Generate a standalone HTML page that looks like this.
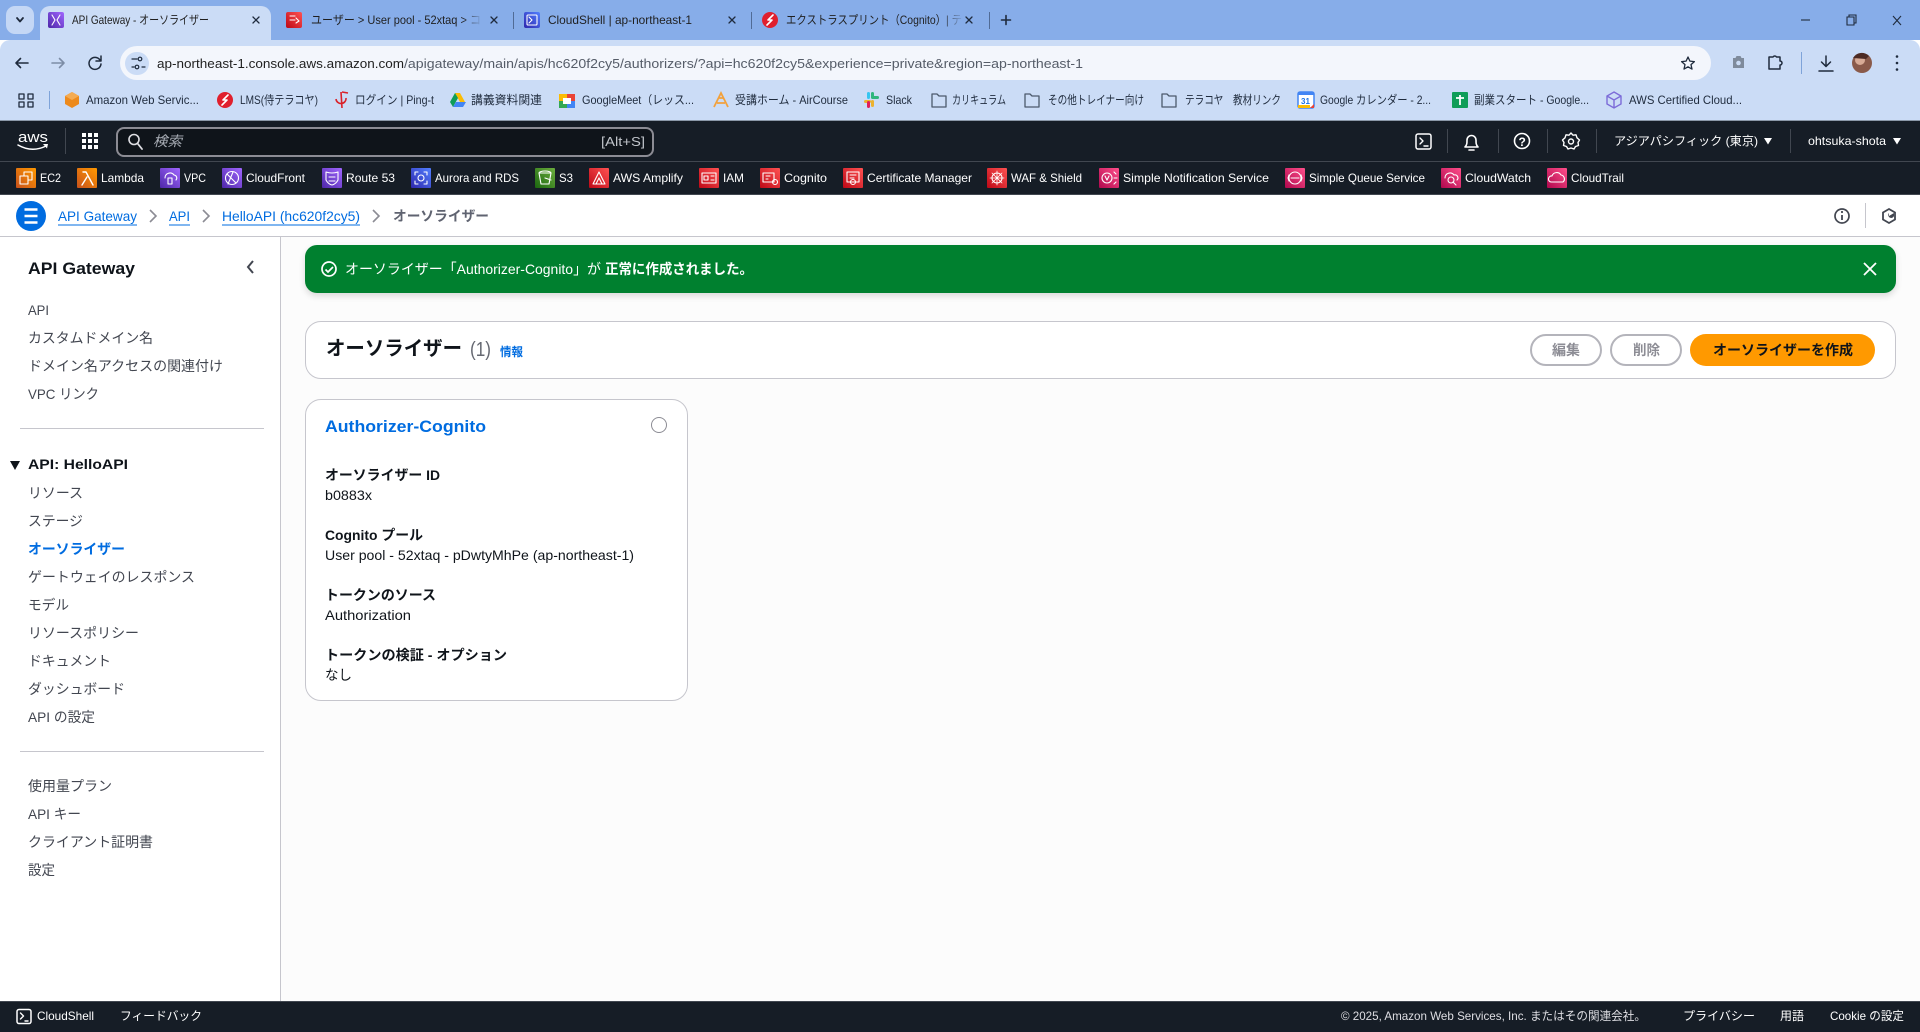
<!DOCTYPE html>
<html lang="ja"><head><meta charset="utf-8"><title>API Gateway - オーソライザー</title>
<style>
html,body{margin:0;padding:0;width:1920px;height:1032px;overflow:hidden;background:#fff}
div{position:absolute;box-sizing:border-box}
svg{position:absolute;left:0;top:0}
text{font-family:"Liberation Sans","Noto Sans CJK JP",sans-serif;font-size:12px;white-space:pre}
.w text{fill:#fff}
.nav{font-size:14px;fill:#424650}
.b{font-weight:700}
.k{font-size:14px;fill:#0f141a}
.kb{font-size:14px;font-weight:700;fill:#0f141a}
.bk{fill:#1f2b3d;font-size:12px}
.tb{fill:#1f1f1f;font-size:12px}
.ln{stroke:#1f2b3d;stroke-width:1.4;fill:none;stroke-linecap:round;stroke-linejoin:round}
.g{stroke:#fff;stroke-width:1.1;fill:none;stroke-linejoin:round;stroke-linecap:round}
.wl{stroke:#fff;stroke-width:1.6;fill:none;stroke-linecap:round;stroke-linejoin:round}
</style></head><body>
<div style="left:0;top:0;width:1920px;height:40px;background:#87ade9"></div>
<div style="left:6px;top:6px;width:28px;height:28px;border-radius:9px;background:#c4d7f5"></div>
<div style="left:40px;top:6px;width:231px;height:36px;border-radius:10px 10px 0 0;background:#cbdcf6"></div>
<div style="left:0;top:40px;width:1920px;height:80px;background:#cbdcf6;border-radius:10px 10px 0 0"></div>
<div style="left:120px;top:46px;width:1591px;height:34px;border-radius:17px;background:#f3f6fc"></div>
<div style="left:125px;top:52px;width:24px;height:23px;border-radius:12px;background:#cbdcf6"></div>
<div style="left:0;top:120px;width:1920px;height:42px;background:#161d26;border-top:1px solid #8b98a8"></div>
<div style="left:0;top:161px;width:1920px;height:34px;background:#161d26;border-top:1px solid #414750;border-bottom:1px solid #414750"></div>
<div style="left:116px;top:127px;width:538px;height:30px;border-radius:8px;background:#0f141a;border:2px solid #8c8c94"></div>
<div style="left:0;top:195px;width:1920px;height:42px;background:#fff;border-bottom:1px solid #c6c6cd"></div>
<div style="left:0;top:237px;width:281px;height:764px;background:#fff;border-right:1px solid #c6c6cd"></div>
<div style="left:281px;top:237px;width:1639px;height:764px;background:#fcfcfc"></div>
<div style="left:20px;top:428px;width:244px;height:1px;background:#c6c6cd"></div>
<div style="left:20px;top:751px;width:244px;height:1px;background:#c6c6cd"></div>
<div style="left:305px;top:245px;width:1591px;height:48px;border-radius:12px;background:#00802f;box-shadow:0 3px 7px rgba(0,0,0,.14)"></div>
<div style="left:305px;top:321px;width:1591px;height:58px;border-radius:16px;background:#fff;border:1px solid #c6c6cd"></div>
<div style="left:305px;top:399px;width:383px;height:302px;border-radius:16px;background:#fff;border:1px solid #c6c6cd"></div>
<div style="left:1530px;top:334px;width:72px;height:32px;border-radius:16px;background:#fff;border:2px solid #b4b4bb"></div>
<div style="left:1610px;top:334px;width:72px;height:32px;border-radius:16px;background:#fff;border:2px solid #b4b4bb"></div>
<div style="left:1690px;top:334px;width:185px;height:32px;border-radius:16px;background:#ff9900"></div>
<div style="left:651px;top:417px;width:16px;height:16px;border-radius:8px;background:#fff;border:1px solid #8c8c94"></div>
<div style="left:16px;top:201px;width:30px;height:30px;border-radius:15px;background:#006ce0"></div>
<div style="left:0;top:1001px;width:1920px;height:31px;background:#161d26;border-top:1px solid #414750"></div>

<svg width="1920" height="1032" viewBox="0 0 1920 1032">
<defs>
<linearGradient id="or" x1="0" y1="1" x2="1" y2="0"><stop offset="0" stop-color="#c8511b"/><stop offset="1" stop-color="#ff9900"/></linearGradient>
<linearGradient id="pu" x1="0" y1="1" x2="1" y2="0"><stop offset="0" stop-color="#4d27a8"/><stop offset="1" stop-color="#a166ff"/></linearGradient>
<linearGradient id="bl" x1="0" y1="1" x2="1" y2="0"><stop offset="0" stop-color="#2e27ad"/><stop offset="1" stop-color="#527fff"/></linearGradient>
<linearGradient id="gr" x1="0" y1="1" x2="1" y2="0"><stop offset="0" stop-color="#1b660f"/><stop offset="1" stop-color="#6cae3e"/></linearGradient>
<linearGradient id="re" x1="0" y1="1" x2="1" y2="0"><stop offset="0" stop-color="#bd0816"/><stop offset="1" stop-color="#ff5252"/></linearGradient>
<linearGradient id="pk" x1="0" y1="1" x2="1" y2="0"><stop offset="0" stop-color="#b0084d"/><stop offset="1" stop-color="#ff4f8b"/></linearGradient>
<linearGradient id="fd" x1="0" x2="1"><stop offset="0" stop-color="#87ade9" stop-opacity="0"/><stop offset="1" stop-color="#87ade9"/></linearGradient>
</defs>

<!-- tab strip -->
<path d="M17 18l3 3.500 3-3.500" fill="none" stroke="#1f2b3d" stroke-width="1.800" stroke-linecap="round" stroke-linejoin="round"/>
<rect x="48" y="12" width="16" height="16" rx="2" fill="url(#pu)"/><path class="g" d="M52 15l3 5-3 5M60 15l-3 5 3 5"/>
<text x="72" y="24" class="tb" textLength="137" lengthAdjust="spacingAndGlyphs">API Gateway - オーソライザー</text>
<path class="ln" d="M253 17l6 6M259 17l-6 6" style="stroke-width:1.300"/>
<rect x="286" y="12" width="16" height="16" rx="2" fill="url(#re)"/><path class="g" d="M290 16h5M290 20h5M296 23l3-2-3-3"/>
<text x="311" y="24" class="tb" textLength="170" lengthAdjust="spacingAndGlyphs">ユーザー &gt; User pool - 52xtaq &gt; コ</text>
<rect x="462" y="10" width="20" height="20" fill="url(#fd)"/>
<path class="ln" d="M491 17l6 6M497 17l-6 6" style="stroke-width:1.300"/>
<rect x="513" y="12" width="1" height="17" fill="#506b96"/>
<rect x="524" y="12" width="16" height="16" rx="2" fill="url(#bl)"/><rect x="527" y="15" width="10" height="10" rx="1" class="g"/><path class="g" d="M529 17l3 3-3 3"/>
<text x="548" y="24" class="tb" textLength="144" lengthAdjust="spacingAndGlyphs">CloudShell | ap-northeast-1</text>
<path class="ln" d="M729 17l6 6M735 17l-6 6" style="stroke-width:1.300"/>
<rect x="751" y="12" width="1" height="17" fill="#506b96"/>
<circle cx="770" cy="20" r="8" fill="#e01f2d"/><path class="g" d="M773 15l-5 5h4l-5 5" style="stroke-width:1.6"/>
<text x="786" y="24" class="tb" textLength="176" lengthAdjust="spacingAndGlyphs">エクストラスプリント（Cognito）| テ</text>
<rect x="940" y="10" width="24" height="20" fill="url(#fd)"/>
<path class="ln" d="M966 17l6 6M972 17l-6 6" style="stroke-width:1.300"/>
<rect x="989" y="12" width="1" height="17" fill="#506b96"/>
<path class="ln" d="M1006 15.500v9M1001.500 20h9" style="stroke-width:1.600"/>
<path d="M1801 20h9" stroke="#1f2b3d" stroke-width="1.100"/>
<path d="M1847 17h7v8h-7zM1849 17v-2h7v8h-2" fill="none" stroke="#1f2b3d" stroke-width="1.100"/>
<path d="M1893 16l8 9M1901 16l-8 9" stroke="#1f2b3d" stroke-width="1.100"/>

<!-- toolbar -->
<path class="ln" d="M28 63H16M20.500 58.500L16 63l4.500 4.500" style="stroke-width:1.600"/>
<path class="ln" d="M52 63h12M59.500 58.500L64 63l-4.500 4.500" style="stroke:#7d8da6;stroke-width:1.600"/>
<path class="ln" d="M100 60a6 6 0 1 0 1 4M101 56v5h-5" style="stroke-width:1.500"/>
<path class="ln" d="M132 59h5M132 67h2M142 67h3" style="stroke-width:1.200"/><circle cx="140" cy="59" r="1.800" class="ln" style="stroke-width:1.200"/><circle cx="137" cy="67" r="1.800" class="ln" style="stroke-width:1.200"/>
<text x="157" y="68" fill="#1f1f1f" style="font-size:13px" textLength="247" lengthAdjust="spacingAndGlyphs">ap-northeast-1.console.aws.amazon.com</text>
<text x="404" y="68" fill="#555c68" style="font-size:13px" textLength="679" lengthAdjust="spacingAndGlyphs">/apigateway/main/apis/hc620f2cy5/authorizers/?api=hc620f2cy5&amp;experience=private&amp;region=ap-northeast-1</text>
<path class="ln" d="M1688 57l1.900 4.100 4.500.5-3.400 3 1 4.500-4-2.300-4 2.300 1-4.500-3.400-3 4.500-.5z" style="stroke-width:1.300"/>
<path d="M1733 58h2.500l1-2h4l1 2h2.500v10h-11z" fill="#7f8b9c"/><circle cx="1738.500" cy="63" r="2.300" fill="#cbdcf6"/>
<path class="ln" d="M1769 57h4a2 2 0 0 1 3.500 0h3.500v4a2 2 0 0 1 0 4v4h-11z" style="stroke-width:1.500"/>
<rect x="1801" y="52" width="1" height="22" fill="#7ea3d9"/>
<path class="ln" d="M1826 56v10M1821.500 62l4.500 4.500 4.500-4.500M1819 71h14" style="stroke-width:1.500"/>
<circle cx="1862" cy="63" r="10" fill="#8a5a4a"/><circle cx="1860" cy="60" r="5" fill="#d8ab96"/><path d="M1853 58a10 10 0 0 1 16-2l-3 3z" fill="#4c2a23"/>
<circle cx="1897" cy="56.500" r="1.300" fill="#1f2b3d"/><circle cx="1897" cy="63" r="1.300" fill="#1f2b3d"/><circle cx="1897" cy="69.500" r="1.300" fill="#1f2b3d"/>

<!-- bookmarks -->
<path class="ln" style="stroke-width:1.300" d="M19 94h5v5h-5zM28 94h5v5h-5zM19 102h5v5h-5zM28 102h5v5h-5z"/>
<rect x="49" y="91" width="1" height="18" fill="#7ea3d9"/>
<path d="M72 92l7 4v8l-7 4-7-4v-8z" fill="#ed8a1c"/><path d="M65 96l7 4 7-4-7-4z" fill="#f4ab52"/>
<text x="86" y="104" class="bk" textLength="113" lengthAdjust="spacingAndGlyphs">Amazon Web Servic...</text>
<circle cx="225" cy="100" r="8" fill="#e01f2d"/><path class="g" d="M228 95l-5 5h4l-5 5" style="stroke-width:1.6"/>
<text x="240" y="104" class="bk" textLength="78" lengthAdjust="spacingAndGlyphs">LMS(侍テラコヤ)</text>
<path d="M341 92l1 16M336 99a5 5 0 1 0 10-1M342 92l6 1" fill="none" stroke="#d9222a" stroke-width="1.600"/>
<text x="355" y="104" class="bk" textLength="79" lengthAdjust="spacingAndGlyphs">ログイン | Ping-t</text>
<path d="M455 93h5l5 9h-5z" fill="#fbbc04"/><path d="M455 93l-5 9 3 5 5-9z" fill="#0f9d58"/><path d="M453 107h10l3-5h-10z" fill="#4285f4"/>
<text x="471" y="104" class="bk" textLength="71" lengthAdjust="spacingAndGlyphs">講義資料関連</text>
<rect x="559" y="94" width="8" height="7" fill="#fbbc04"/><rect x="559" y="101" width="8" height="7" fill="#34a853"/><rect x="567" y="94" width="8" height="7" fill="#ea4335"/><rect x="567" y="101" width="8" height="7" fill="#4285f4"/><rect x="563" y="98" width="8" height="6" fill="#fff"/>
<text x="582" y="104" class="bk" textLength="112" lengthAdjust="spacingAndGlyphs">GoogleMeet（レッス...</text>
<path d="M714 107l7-14 7 14M717 103h8M719 98h4" fill="none" stroke="#f2a13c" stroke-width="1.800"/>
<text x="735" y="104" class="bk" textLength="113" lengthAdjust="spacingAndGlyphs">受講ホーム - AirCourse</text>
<rect x="867" y="92" width="3" height="7" rx="1.500" fill="#36c5f0"/><rect x="871" y="92" width="3" height="7" rx="1.500" fill="#2eb67d"/><rect x="864" y="100" width="7" height="3" rx="1.500" fill="#ecb22e"/><rect x="872" y="96" width="7" height="3" rx="1.500" fill="#2eb67d"/><rect x="867" y="101" width="3" height="7" rx="1.500" fill="#e01e5a"/><rect x="871" y="100" width="3" height="7" rx="1.500" fill="#ecb22e"/>
<text x="886" y="104" class="bk" textLength="26" lengthAdjust="spacingAndGlyphs">Slack</text>
<g class="ln" style="stroke:#4c5a6c;stroke-width:1.300"><path d="M932 94h5l2 2h7v11h-14z"/><path d="M1025 94h5l2 2h7v11h-14z"/><path d="M1162 94h5l2 2h7v11h-14z"/></g>
<text x="952" y="104" class="bk" textLength="54" lengthAdjust="spacingAndGlyphs">カリキュラム</text>
<text x="1048" y="104" class="bk" textLength="96" lengthAdjust="spacingAndGlyphs">その他トレイナー向け</text>
<text x="1185" y="104" class="bk" textLength="96" lengthAdjust="spacingAndGlyphs">テラコヤ　教材リンク</text>
<rect x="1298" y="92" width="16" height="16" rx="2" fill="#fff" stroke="#4285f4" stroke-width="1.500"/><rect x="1298" y="92" width="16" height="3" fill="#4285f4"/><path d="M1310 108l4-4v4z" fill="#ea4335"/><rect x="1298" y="105" width="12" height="3" fill="#fbbc04"/><text x="1301" y="104" fill="#1a73e8" style="font-size:8px;font-weight:700">31</text>
<text x="1320" y="104" class="bk" textLength="111" lengthAdjust="spacingAndGlyphs">Google カレンダー - 2...</text>
<rect x="1452" y="92" width="16" height="16" rx="1" fill="#0f9d58"/><path d="M1460 95v10M1456 98h8" stroke="#fff" stroke-width="1.800"/>
<text x="1474" y="104" class="bk" textLength="115" lengthAdjust="spacingAndGlyphs">副業スタート - Google...</text>
<path d="M1614 92l7 4v8l-7 4-7-4v-8zM1607 96l7 4 7-4M1614 100v8" fill="none" stroke="#7c6bd8" stroke-width="1.400"/>
<text x="1629" y="104" class="bk" textLength="113" lengthAdjust="spacingAndGlyphs">AWS Certified Cloud...</text>

<!-- aws header -->
<g class="w">
<text x="18" y="142" style="font-size:15px" textLength="30" lengthAdjust="spacingAndGlyphs">aws</text>
</g>
<path d="M18 145q14 8 28 1" fill="none" stroke="#fff" stroke-width="1.500" stroke-linecap="round"/><path d="M43 144l5 0-1 4.500z" fill="#fff"/>
<rect x="65" y="128" width="1" height="26" fill="#414750"/>
<g fill="#fff"><rect x="82" y="133" width="4" height="4"/><rect x="88" y="133" width="4" height="4"/><rect x="94" y="133" width="4" height="4"/><rect x="82" y="139" width="4" height="4"/><rect x="88" y="139" width="4" height="4"/><rect x="94" y="139" width="4" height="4"/><rect x="82" y="145" width="4" height="4"/><rect x="88" y="145" width="4" height="4"/><rect x="94" y="145" width="4" height="4"/></g>
<circle cx="134" cy="139.500" r="5" fill="none" stroke="#dedee3" stroke-width="1.600"/><path d="M138 144l4 5" stroke="#dedee3" stroke-width="1.800" stroke-linecap="round"/>
<text x="153" y="146" fill="#a8adb5" style="font-size:14px;font-style:italic" textLength="29" lengthAdjust="spacingAndGlyphs">検索</text>
<text x="601" y="146" fill="#c0c4ca" style="font-size:13px" textLength="44" lengthAdjust="spacingAndGlyphs">[Alt+S]</text>
<rect x="1416" y="134" width="15" height="15" rx="2" class="wl" style="stroke-width:1.500"/><path class="wl" d="M1420 138l3 3-3 3M1424 146h4" style="stroke-width:1.400"/>
<g fill="#414750"><rect x="1447" y="129" width="1" height="24"/><rect x="1498" y="129" width="1" height="24"/><rect x="1547" y="129" width="1" height="24"/><rect x="1596" y="129" width="1" height="24"/><rect x="1790" y="129" width="1" height="24"/></g>
<path class="wl" d="M1465 147c2-2 2-4 2-7a4.500 4.500 0 0 1 9 0c0 3 0 5 2 7zM1469 150h5"/>
<circle cx="1522" cy="141" r="7.500" class="wl"/><text x="1518.500" y="146" fill="#fff" style="font-size:12px;font-weight:700">?</text>
<path class="wl" d="M1571 133l2 2.200 3-.4 1 3 2.500 2.200-1.500 2.500.5 3-3 1-1.500 2.500-3-1-3 1-1.500-2.500-3-1 .5-3-1.500-2.500 2.500-2.200 1-3 3 .4z" style="stroke-width:1.400"/><circle cx="1571" cy="141.500" r="2.500" class="wl" style="stroke-width:1.400"/>
<g class="w"><text x="1614" y="145" textLength="144" lengthAdjust="spacingAndGlyphs">アジアパシフィック (東京)</text>
<text x="1808" y="145" textLength="78" lengthAdjust="spacingAndGlyphs">ohtsuka-shota</text></g>
<path d="M1764 138h8l-4 6.500z" fill="#fff"/><path d="M1893 138h8l-4 6.500z" fill="#fff"/>

<!-- services bar -->
<rect x="16" y="168" width="20" height="20" rx="1" fill="url(#or)"/><path class="g" d="M20 176h8v8h-8zM24 176v-4h8v8h-4"/>
<rect x="77" y="168" width="20" height="20" rx="1" fill="url(#or)"/><path class="g" d="M83 172h3l7 13M87 177l-5 8" style="stroke-width:1.400"/>
<rect x="160" y="168" width="20" height="20" rx="1" fill="url(#pu)"/><path class="g" d="M165 178a5 5 0 0 1 9-3 3 3 0 0 1 2 5M168 178h4v6h-4z"/>
<rect x="222" y="168" width="20" height="20" rx="1" fill="url(#pu)"/><circle cx="232" cy="178" r="6.500" class="g"/><path class="g" d="M227 174l9 9M233 172l-5 12"/>
<rect x="322" y="168" width="20" height="20" rx="1" fill="url(#pu)"/><path class="g" d="M326 172q6 2 12 0v8q-2 4-6 5-4-1-6-5zM329 177h6M329 181h6"/>
<rect x="411" y="168" width="20" height="20" rx="1" fill="url(#bl)"/><path class="g" d="M415 175v-3h3M424 172h3v3M427 181v3h-3M418 184h-3v-3"/><circle cx="421" cy="178" r="3" class="g"/>
<rect x="535" y="168" width="20" height="20" rx="1" fill="url(#gr)"/><path class="g" d="M539 173h12l-2 11h-8zM539 173a6 2 0 0 1 12 0M545 178l6 2"/>
<rect x="589" y="168" width="20" height="20" rx="1" fill="url(#re)"/><path class="g" d="M599 172l6 12h-12zM599 178l-3 6M599 178l3 6"/>
<rect x="699" y="168" width="20" height="20" rx="1" fill="url(#re)"/><path class="g" d="M702 173h14v10h-14zM704 176h4v4h-4zM711 176h3M711 180h3"/>
<rect x="760" y="168" width="20" height="20" rx="1" fill="url(#re)"/><path class="g" d="M763 173h11v9h-11zM766 176h4M766 179h2"/><circle cx="775" cy="182" r="2.500" class="g"/>
<rect x="843" y="168" width="20" height="20" rx="1" fill="url(#re)"/><path class="g" d="M847 172h12v10h-12zM850 175h6M850 178h4"/><circle cx="853" cy="182" r="2.500" class="g"/>
<rect x="987" y="168" width="20" height="20" rx="1" fill="url(#re)"/><circle cx="997" cy="178" r="5" class="g"/><path class="g" d="M997 171v14M990 178h14M992 173l10 10M1002 173l-10 10" style="stroke-width:.8"/>
<rect x="1099" y="168" width="20" height="20" rx="1" fill="url(#pk)"/><circle cx="1107" cy="178" r="5" class="g"/><path class="g" d="M1105 176l2 4 2-4M1114 172l2 2M1114 178h3M1114 184l2-2"/>
<rect x="1285" y="168" width="20" height="20" rx="1" fill="url(#pk)"/><circle cx="1295" cy="178" r="6" class="g"/><path class="g" d="M1291 178h8M1289 175l-1 3 1 3M1301 175l1 3-1 3"/>
<rect x="1441" y="168" width="20" height="20" rx="1" fill="url(#pk)"/><path class="g" d="M1445 178a5 5 0 0 1 9-3 3 3 0 0 1 3 5"/><circle cx="1451" cy="180" r="3" class="g"/><path class="g" d="M1453 182l3 3"/>
<rect x="1547" y="168" width="20" height="20" rx="1" fill="url(#pk)"/><path class="g" d="M1551 182a3 3 0 0 1 1-6 5 5 0 0 1 9-1 4 4 0 0 1 2 7z"/>
<g class="w">
<text x="40" y="182" textLength="21" lengthAdjust="spacingAndGlyphs">EC2</text>
<text x="101" y="182" textLength="43" lengthAdjust="spacingAndGlyphs">Lambda</text>
<text x="184" y="182" textLength="22" lengthAdjust="spacingAndGlyphs">VPC</text>
<text x="246" y="182" textLength="59" lengthAdjust="spacingAndGlyphs">CloudFront</text>
<text x="346" y="182" textLength="49" lengthAdjust="spacingAndGlyphs">Route 53</text>
<text x="435" y="182" textLength="84" lengthAdjust="spacingAndGlyphs">Aurora and RDS</text>
<text x="559" y="182" textLength="14" lengthAdjust="spacingAndGlyphs">S3</text>
<text x="613" y="182" textLength="70" lengthAdjust="spacingAndGlyphs">AWS Amplify</text>
<text x="723" y="182" textLength="21" lengthAdjust="spacingAndGlyphs">IAM</text>
<text x="784" y="182" textLength="43" lengthAdjust="spacingAndGlyphs">Cognito</text>
<text x="867" y="182" textLength="105" lengthAdjust="spacingAndGlyphs">Certificate Manager</text>
<text x="1011" y="182" textLength="71" lengthAdjust="spacingAndGlyphs">WAF &amp; Shield</text>
<text x="1123" y="182" textLength="146" lengthAdjust="spacingAndGlyphs">Simple Notification Service</text>
<text x="1309" y="182" textLength="116" lengthAdjust="spacingAndGlyphs">Simple Queue Service</text>
<text x="1465" y="182" textLength="66" lengthAdjust="spacingAndGlyphs">CloudWatch</text>
<text x="1571" y="182" textLength="53" lengthAdjust="spacingAndGlyphs">CloudTrail</text>
</g>

<!-- breadcrumb -->
<path d="M24.500 209.500h13M24.500 216h13M24.500 222.500h13" stroke="#fff" stroke-width="2.600" stroke-linecap="butt"/>
<text x="58" y="221" style="font-size:14px" fill="#006ce0" textLength="79" lengthAdjust="spacingAndGlyphs">API Gateway</text>
<text x="169" y="221" style="font-size:14px" fill="#006ce0" textLength="21" lengthAdjust="spacingAndGlyphs">API</text>
<text x="222" y="221" style="font-size:14px" fill="#006ce0" textLength="138" lengthAdjust="spacingAndGlyphs">HelloAPI (hc620f2cy5)</text>
<path d="M58 225h79M169 225h21M222 225h138" stroke="#006ce0" stroke-width="1"/>
<path d="M150 210l6 6-6 6M203 210l6 6-6 6M373 210l6 6-6 6" fill="none" stroke="#8c8c94" stroke-width="1.600"/>
<text x="393" y="221" class="b" style="font-size:14px" fill="#5f6370" textLength="96" lengthAdjust="spacingAndGlyphs">オーソライザー</text>
<circle cx="1842" cy="216" r="7" fill="none" stroke="#424650" stroke-width="1.700"/><path d="M1842 215v5" stroke="#424650" stroke-width="1.800"/><circle cx="1842" cy="212" r="1.100" fill="#424650"/>
<rect x="1865" y="203" width="1" height="25" fill="#c6c6cd"/>
<path d="M1889 209l6 3.500v7l-6 3.500-6-3.500v-7z" fill="none" stroke="#424650" stroke-width="1.800"/><path d="M1889 216l5-3v3a3 3 0 0 1-5 1 3 3 0 0 1 0-4" fill="#424650"/>

<!-- side nav -->
<text x="28" y="274" class="b" fill="#0f141a" style="font-size:17px" textLength="107" lengthAdjust="spacingAndGlyphs">API Gateway</text>
<path d="M253 261l-5 6 5 6" fill="none" stroke="#424650" stroke-width="2"/>
<text x="28" y="315" class="nav" textLength="21" lengthAdjust="spacingAndGlyphs">API</text>
<text x="28" y="343" class="nav" textLength="125" lengthAdjust="spacingAndGlyphs">カスタムドメイン名</text>
<text x="28" y="371" class="nav" textLength="195" lengthAdjust="spacingAndGlyphs">ドメイン名アクセスの関連付け</text>
<text x="28" y="399" class="nav" textLength="71" lengthAdjust="spacingAndGlyphs">VPC リンク</text>
<path d="M10 461h10l-5 9z" fill="#0f141a"/>
<text x="28" y="469" class="kb" textLength="100" lengthAdjust="spacingAndGlyphs">API: HelloAPI</text>
<text x="28" y="498" class="nav" textLength="55" lengthAdjust="spacingAndGlyphs">リソース</text>
<text x="28" y="526" class="nav" textLength="55" lengthAdjust="spacingAndGlyphs">ステージ</text>
<text x="28" y="554" class="nav b" style="fill:#006ce0" textLength="97" lengthAdjust="spacingAndGlyphs">オーソライザー</text>
<text x="28" y="582" class="nav" textLength="167" lengthAdjust="spacingAndGlyphs">ゲートウェイのレスポンス</text>
<text x="28" y="610" class="nav" textLength="41" lengthAdjust="spacingAndGlyphs">モデル</text>
<text x="28" y="638" class="nav" textLength="111" lengthAdjust="spacingAndGlyphs">リソースポリシー</text>
<text x="28" y="666" class="nav" textLength="83" lengthAdjust="spacingAndGlyphs">ドキュメント</text>
<text x="28" y="694" class="nav" textLength="97" lengthAdjust="spacingAndGlyphs">ダッシュボード</text>
<text x="28" y="722" class="nav" textLength="67" lengthAdjust="spacingAndGlyphs">API の設定</text>
<text x="28" y="791" class="nav" textLength="84" lengthAdjust="spacingAndGlyphs">使用量プラン</text>
<text x="28" y="819" class="nav" textLength="53" lengthAdjust="spacingAndGlyphs">API キー</text>
<text x="28" y="847" class="nav" textLength="125" lengthAdjust="spacingAndGlyphs">クライアント証明書</text>
<text x="28" y="875" class="nav" textLength="27" lengthAdjust="spacingAndGlyphs">設定</text>

<!-- banner -->
<circle cx="329" cy="269" r="7" fill="none" stroke="#fff" stroke-width="1.700"/><path d="M325.500 269.500l2.500 2.500 5-5" fill="none" stroke="#fff" stroke-width="1.700"/>
<text x="345" y="274" fill="#fff" style="font-size:14px" textLength="256" lengthAdjust="spacingAndGlyphs">オーソライザー「Authorizer-Cognito」が</text>
<text x="605" y="274" fill="#fff" class="b" style="font-size:14px" textLength="148" lengthAdjust="spacingAndGlyphs">正常に作成されました。</text>
<path d="M1864 263l12 12M1876 263l-12 12" stroke="#fff" stroke-width="1.800"/>

<!-- panel -->
<text x="326" y="355" class="b" fill="#0f141a" style="font-size:20px" textLength="136" lengthAdjust="spacingAndGlyphs">オーソライザー</text>
<text x="470" y="356" fill="#656871" style="font-size:20px" textLength="21" lengthAdjust="spacingAndGlyphs">(1)</text>
<text x="500" y="356" class="b" fill="#006ce0" style="font-size:12px" textLength="23" lengthAdjust="spacingAndGlyphs">情報</text>
<text x="1552" y="355" class="b" fill="#8c8c94" style="font-size:14px" textLength="28" lengthAdjust="spacingAndGlyphs">編集</text>
<text x="1633" y="355" class="b" fill="#8c8c94" style="font-size:14px" textLength="27" lengthAdjust="spacingAndGlyphs">削除</text>
<text x="1713" y="355" class="b" fill="#0f141a" style="font-size:14px" textLength="140" lengthAdjust="spacingAndGlyphs">オーソライザーを作成</text>

<!-- card -->
<text x="325" y="432" class="b" fill="#006ce0" style="font-size:17px" textLength="161" lengthAdjust="spacingAndGlyphs">Authorizer-Cognito</text>
<text x="325" y="480" class="kb" textLength="115" lengthAdjust="spacingAndGlyphs">オーソライザー ID</text>
<text x="325" y="500" class="k" textLength="47" lengthAdjust="spacingAndGlyphs">b0883x</text>
<text x="325" y="540" class="kb" textLength="98" lengthAdjust="spacingAndGlyphs">Cognito プール</text>
<text x="325" y="560" class="k" textLength="309" lengthAdjust="spacingAndGlyphs">User pool - 52xtaq - pDwtyMhPe (ap-northeast-1)</text>
<text x="325" y="600" class="kb" textLength="111" lengthAdjust="spacingAndGlyphs">トークンのソース</text>
<text x="325" y="620" class="k" textLength="86" lengthAdjust="spacingAndGlyphs">Authorization</text>
<text x="325" y="660" class="kb" textLength="182" lengthAdjust="spacingAndGlyphs">トークンの検証 - オプション</text>
<text x="325" y="680" class="k" textLength="27" lengthAdjust="spacingAndGlyphs">なし</text>

<!-- footer -->
<rect x="17" y="1009.500" width="14" height="14" rx="2" class="wl" style="stroke-width:1.500"/><path class="wl" d="M20.500 1013l3 3-3 3M25 1021h3" style="stroke-width:1.400"/>
<g class="w">
<text x="37" y="1020" textLength="57" lengthAdjust="spacingAndGlyphs">CloudShell</text>
<text x="120" y="1020" textLength="82" lengthAdjust="spacingAndGlyphs">フィードバック</text>
<text x="1341" y="1020" style="fill:#dedee3" textLength="305" lengthAdjust="spacingAndGlyphs">© 2025, Amazon Web Services, Inc. またはその関連会社。</text>
<text x="1683" y="1020" textLength="72" lengthAdjust="spacingAndGlyphs">プライバシー</text>
<text x="1780" y="1020" textLength="24" lengthAdjust="spacingAndGlyphs">用語</text>
<text x="1830" y="1020" textLength="74" lengthAdjust="spacingAndGlyphs">Cookie の設定</text>
</g>
</svg>
</body></html>
